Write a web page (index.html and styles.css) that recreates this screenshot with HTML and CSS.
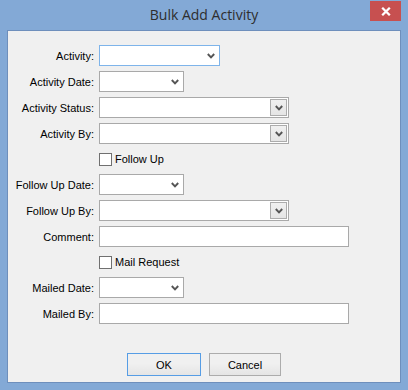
FILE: index.html
```html
<!DOCTYPE html>
<html>
<head>
<meta charset="utf-8">
<link rel="stylesheet" href="styles.css">
</head>
<body>
<div class="window">
  <div class="titlebar">
    <span class="spacer"></span>
    <span class="title">Bulk Add Activity</span>
    <button class="close" aria-label="Close">
      <svg width="10" height="9" viewBox="0 0 10 9"><path d="M1.2 0.8 L8.8 8.2 M8.8 0.8 L1.2 8.2" stroke="#fff" stroke-width="2.3" fill="none"/></svg>
    </button>
  </div>
  <div class="client">
    <div class="form">
      <label class="lbl">Activity:</label>
      <div class="combo w121 focused"><span class="chev"><svg width="8" height="6" viewBox="0 0 8 6"><polyline points="0.8,1 4,4.4 7.2,1" fill="none" stroke="#555" stroke-width="1.9"/></svg></span></div>

      <label class="lbl">Activity Date:</label>
      <div class="combo w85"><span class="chev"><svg width="8" height="6" viewBox="0 0 8 6"><polyline points="0.8,1 4,4.4 7.2,1" fill="none" stroke="#555" stroke-width="1.9"/></svg></span></div>

      <label class="lbl">Activity Status:</label>
      <div class="combo w190 editable"><span class="dropbtn"><svg width="8" height="6" viewBox="0 0 8 6"><polyline points="0.8,1 4,4.4 7.2,1" fill="none" stroke="#555" stroke-width="1.9"/></svg></span></div>

      <label class="lbl">Activity By:</label>
      <div class="combo w190 editable"><span class="dropbtn"><svg width="8" height="6" viewBox="0 0 8 6"><polyline points="0.8,1 4,4.4 7.2,1" fill="none" stroke="#555" stroke-width="1.9"/></svg></span></div>

      <span class="lbl"></span>
      <label class="check"><span class="box"></span>Follow Up</label>

      <label class="lbl">Follow Up Date:</label>
      <div class="combo w85"><span class="chev"><svg width="8" height="6" viewBox="0 0 8 6"><polyline points="0.8,1 4,4.4 7.2,1" fill="none" stroke="#555" stroke-width="1.9"/></svg></span></div>

      <label class="lbl">Follow Up By:</label>
      <div class="combo w190 editable"><span class="dropbtn"><svg width="8" height="6" viewBox="0 0 8 6"><polyline points="0.8,1 4,4.4 7.2,1" fill="none" stroke="#555" stroke-width="1.9"/></svg></span></div>

      <label class="lbl">Comment:</label>
      <div class="text w250"></div>

      <span class="lbl"></span>
      <label class="check"><span class="box"></span>Mail Request</label>

      <label class="lbl">Mailed Date:</label>
      <div class="combo w85"><span class="chev"><svg width="8" height="6" viewBox="0 0 8 6"><polyline points="0.8,1 4,4.4 7.2,1" fill="none" stroke="#555" stroke-width="1.9"/></svg></span></div>

      <label class="lbl">Mailed By:</label>
      <div class="text w250"></div>
    </div>
    <div class="buttons">
      <button class="btn ok">OK</button>
      <button class="btn cancel">Cancel</button>
    </div>
  </div>
</div>
</body>
</html>
```
FILE: styles.css
```css
html, body {
  margin: 0;
  padding: 0;
}
body {
  width: 408px;
  height: 390px;
  overflow: hidden;
  font-family: "Liberation Sans", Arial, sans-serif;
}
.window {
  width: 408px;
  height: 390px;
  box-sizing: border-box;
  background: #83a9d6;
  display: flex;
  flex-direction: column;
}
.titlebar {
  height: 30px;
  display: grid;
  grid-template-columns: 1fr auto 1fr;
  align-items: start;
}
.title {
  font-family: "Open Sans", sans-serif;
  font-size: 14px;
  color: #2e2e2e;
  line-height: 20px;
  margin-top: 5px;
}
.close {
  justify-self: end;
  margin: 1px 7px 0 0;
  width: 31px;
  height: 20px;
  padding: 0;
  border: 0;
  background: #c75050;
  display: flex;
  align-items: center;
  justify-content: center;
}
.client {
  flex: 1;
  margin: 0 7px 7px 7px;
  border: 1px solid #6e8fbc;
  background: #f0f0f0;
  padding-top: 14px;
}
.form {
  display: grid;
  grid-template-columns: 86px auto;
  grid-template-rows: 21px 21px 21px 21px 20px 21px 21px 21px 20px 21px 21px;
  column-gap: 5px;
  row-gap: 5px;
  align-items: center;
}
.lbl {
  text-align: right;
  font-size: 11px;
  color: #000;
  white-space: nowrap;
}
.combo, .text {
  box-sizing: border-box;
  height: 21px;
  border: 1px solid #a9a9a9;
  background: #fff;
  display: flex;
  align-items: center;
  justify-content: flex-end;
}
.combo.focused {
  border-color: #7eb4ea;
}
.w121 { width: 121px; }
.w85 { width: 85px; }
.w190 { width: 190px; }
.w250 { width: 250px; }
.chev {
  display: flex;
  margin-right: 4px;
  margin-top: 1px;
}
.dropbtn {
  box-sizing: border-box;
  width: 17px;
  height: 17px;
  margin-right: 1px;
  border: 1px solid #acacac;
  background: linear-gradient(#f0f0f0, #e5e5e5);
  display: flex;
  align-items: center;
  justify-content: center;
}
.check {
  display: flex;
  align-items: center;
  font-size: 11px;
  color: #000;
  gap: 3px;
}
.box {
  box-sizing: border-box;
  width: 13px;
  height: 13px;
  border: 1px solid #707070;
  background: #fff;
}
.buttons {
  display: flex;
  justify-content: center;
  gap: 8px;
  margin-top: 29px;
}
.btn {
  box-sizing: border-box;
  height: 23px;
  padding: 0;
  font-family: "Liberation Sans", Arial, sans-serif;
  font-size: 11px;
  color: #000;
  border: 1px solid #acacac;
  background: linear-gradient(#f0f0f0 45%, #e5e5e5);
}
.btn.ok {
  width: 74px;
  border-color: #569de5;
}
.btn.cancel {
  width: 72px;
}
```
